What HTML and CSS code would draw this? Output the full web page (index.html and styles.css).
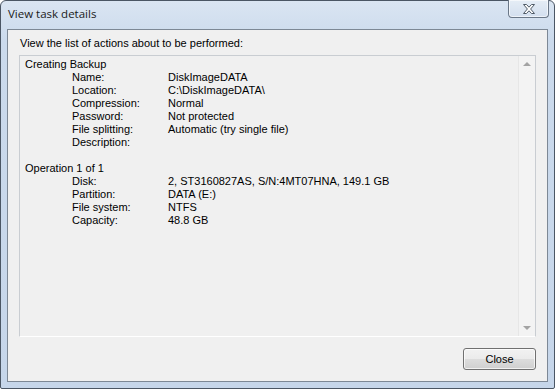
FILE: index.html
```html
<!DOCTYPE html>
<html lang="en">
<head>
    <meta charset="UTF-8">
    <title>View task details</title>
    <link rel="stylesheet" href="styles.css">
</head>
<body>
    <div class="window">
        <div class="titlebar">
            <span class="title">View task details</span>
            <div class="caption-close">
                <svg width="14" height="12" viewBox="0 0 14 12">
                    <path d="M1.5 1.5 H4.5 L7 4.2 L9.5 1.5 H12.5 L8.6 6 L12.5 10.5 H9.5 L7 7.8 L4.5 10.5 H1.5 L5.4 6 Z" fill="#fff" stroke="#4f5a66" stroke-width="1" stroke-linejoin="round"/>
                </svg>
            </div>
        </div>

        <div class="client">
            <div class="caption">View the list of actions about to be performed:</div>

            <div class="listbox">
                <div class="list-content">
                    <div class="group-title">Creating Backup</div>
                    <div class="rows">
                        <span>Name:</span><span>DiskImageDATA</span>
                        <span>Location:</span><span>C:\DiskImageDATA\</span>
                        <span>Compression:</span><span>Normal</span>
                        <span>Password:</span><span>Not protected</span>
                        <span>File splitting:</span><span>Automatic (try single file)</span>
                        <span>Description:</span><span></span>
                    </div>
                    <div class="spacer"></div>
                    <div class="group-title">Operation 1 of 1</div>
                    <div class="rows">
                        <span>Disk:</span><span>2, ST3160827AS, S/N:4MT07HNA, 149.1 GB</span>
                        <span>Partition:</span><span>DATA (E:)</span>
                        <span>File system:</span><span>NTFS</span>
                        <span>Capacity:</span><span>48.8 GB</span>
                    </div>
                </div>
                <div class="scrollbar">
                    <div class="arrow arrow-up"></div>
                    <div class="track"></div>
                    <div class="arrow arrow-down"></div>
                </div>
            </div>

            <div class="footer">
                <button class="btn">Close</button>
            </div>
        </div>
    </div>
</body>
</html>
```

FILE: styles.css
```css
html, body {
    margin: 0;
    padding: 0;
}
body {
    width: 555px;
    height: 389px;
    font-family: "Liberation Sans", Arial, sans-serif;
    font-size: 11px;
    color: #000;
    background: #fff;
}
.window {
    box-sizing: border-box;
    width: 555px;
    height: 389px;
    border: 1px solid #4b5664;
    border-radius: 6px 6px 2px 2px;
    background: linear-gradient(#dae5f2, #cbdaec 40px, #c6d6ea);
    padding: 0 6px 6px 6px;
    display: flex;
    flex-direction: column;
}
.titlebar {
    height: 28px;
    display: flex;
    justify-content: space-between;
    align-items: flex-start;
}
.title {
    font-family: "Open Sans", sans-serif;
    font-size: 11.5px;
    color: #1a1a1a;
    line-height: 16px;
    margin-top: 5px;
    margin-left: 1px;
}
.caption-close {
    box-sizing: border-box;
    width: 41px;
    height: 18px;
    margin-top: -1px;
    margin-right: -1px;
    border: 1px solid #6a7787;
    border-top: none;
    border-radius: 0 0 4px 4px;
    background: linear-gradient(#e5edf6, #d3dfee);
    box-shadow: inset 0 0 0 1px rgba(255,255,255,0.6);
    display: flex;
    align-items: center;
    justify-content: center;
}
.client {
    flex: 1;
    border: 1px solid #7d8895;
    background: #f0f0f0;
    padding: 7px 11px 11px 11px;
    display: flex;
    flex-direction: column;
}
.caption {
    line-height: 13px;
    height: 13px;
    padding-left: 1px;
}
.listbox {
    margin-top: 5px;
    height: 282px;
    box-sizing: border-box;
    border: 1px solid #c9cdd2;
    border-bottom-color: #fff;
    display: flex;
    background: #f0f0f0;
}
.list-content {
    flex: 1;
    padding: 2px 0 0 5px;
    line-height: 13px;
}
.rows {
    display: grid;
    grid-template-columns: 96px auto;
    padding-left: 47px;
}
.spacer {
    height: 13px;
}
.scrollbar {
    width: 17px;
    display: flex;
    flex-direction: column;
    background: #f3f3f3;
    border-left: 1px solid #e6e6e6;
    box-sizing: border-box;
}
.track {
    flex: 1;
}
.arrow {
    height: 17px;
    position: relative;
}
.arrow::after {
    content: "";
    position: absolute;
    left: 4px;
    width: 0;
    height: 0;
    border-left: 4px solid transparent;
    border-right: 4px solid transparent;
}
.arrow-up::after {
    top: 6px;
    border-bottom: 4px solid #a3a3a3;
}
.arrow-down::after {
    top: 7px;
    border-top: 4px solid #a3a3a3;
}
.footer {
    margin-top: 11px;
    display: flex;
    justify-content: flex-end;
}
.btn {
    width: 73px;
    height: 22px;
    font-family: "Liberation Sans", Arial, sans-serif;
    font-size: 11px;
    color: #000;
    border: 1px solid #707070;
    border-radius: 3px;
    background: linear-gradient(#f2f2f2, #ebebeb 50%, #dddddd 50%, #cfcfcf);
    box-shadow: inset 0 0 0 1px rgba(255,255,255,0.7);
    padding: 0;
    cursor: pointer;
}
```
